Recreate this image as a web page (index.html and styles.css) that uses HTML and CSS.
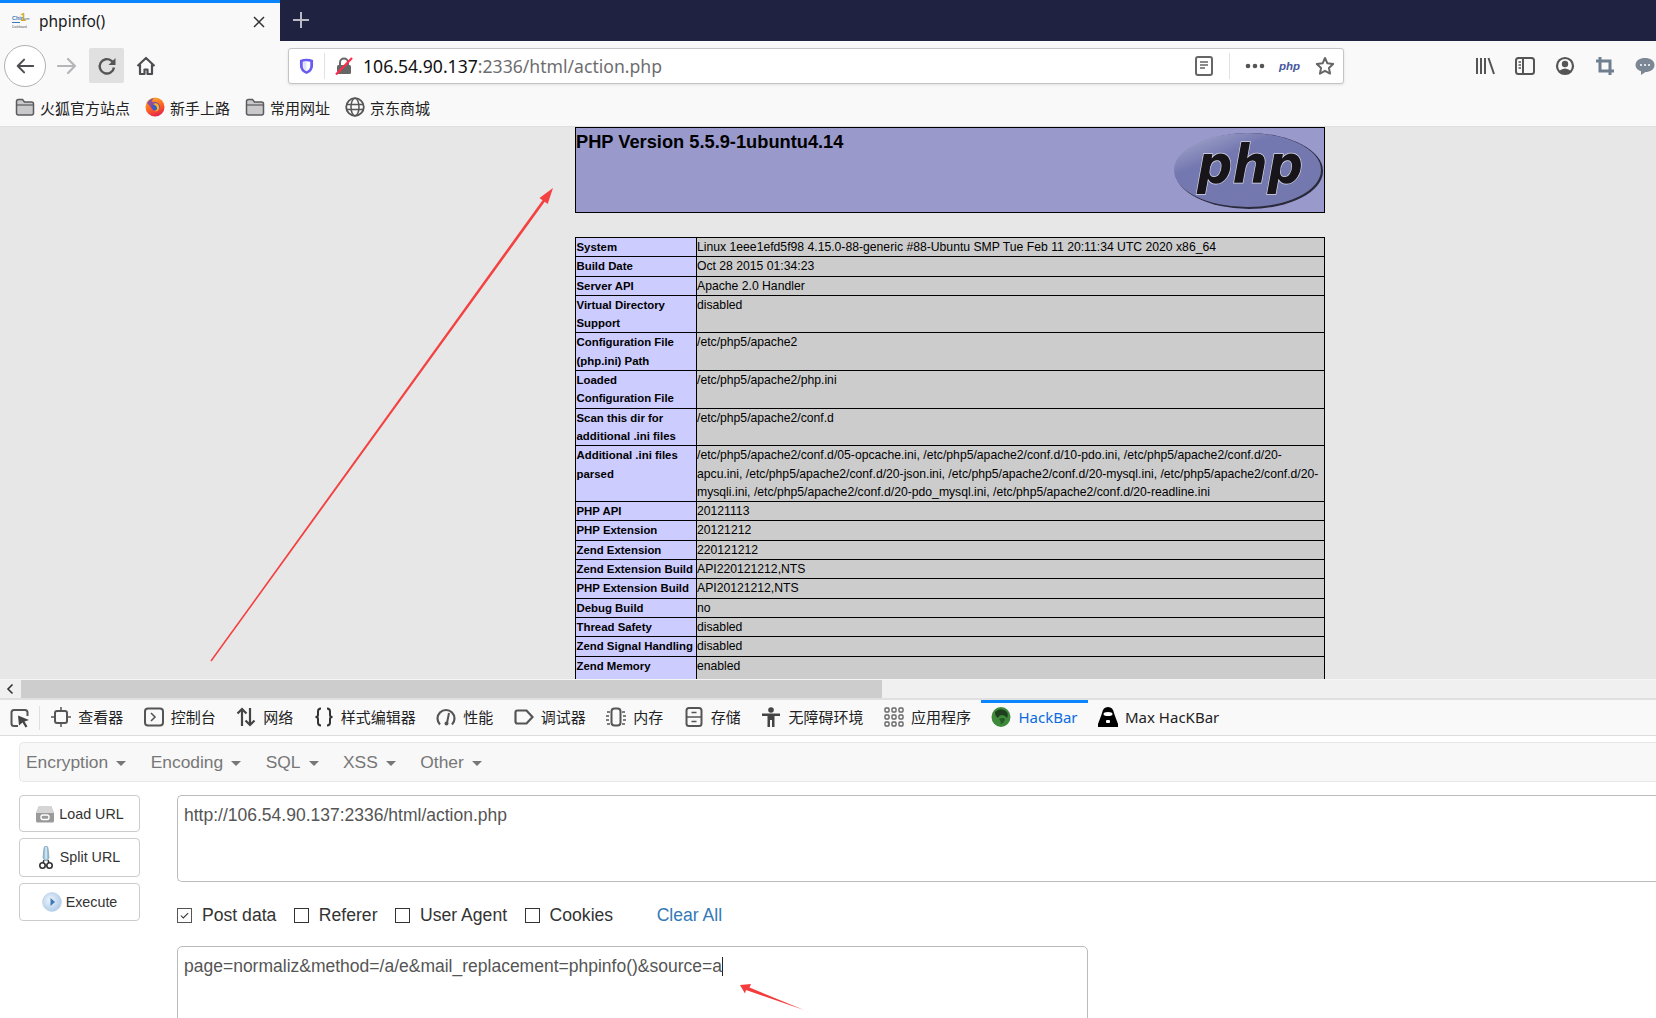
FILE: index.html
```html
<!DOCTYPE html>
<html lang="zh">
<head>
<meta charset="utf-8">
<title>phpinfo()</title>
<link rel="stylesheet" href="styles.css">
</head>
<body>
<svg class="icon-defs" width="0" height="0" aria-hidden="true">
  <defs>
    <symbol id="folder" viewBox="0 0 20 18"><path d="M1.5 3.500q0-2 2-2h4l2 2.500h7q2 0 2 2v9q0 2-2 2h-13q-2 0-2-2z" fill="#c9c9cb" stroke="#5b5b5f" stroke-width="1.500"/><path d="M2 7h16" stroke="#5b5b5f" stroke-width="1.200"/></symbol>
    <linearGradient id="ffg" x1="0.200" y1="0" x2="0.600" y2="1"><stop offset="0" stop-color="#ffb52e"/><stop offset=".5" stop-color="#ff6a1f"/><stop offset="1" stop-color="#e5214e"/></linearGradient>
    <radialGradient id="playg" cx=".4" cy=".4" r=".7"><stop offset="0" stop-color="#eef5fc"/><stop offset="1" stop-color="#a8c6e6"/></radialGradient>
    <linearGradient id="phpg" x1="0.100" y1="0" x2="0.900" y2="1"><stop offset="0" stop-color="#a5a8cc"/><stop offset=".3" stop-color="#7478b0"/><stop offset="1" stop-color="#7378ae"/></linearGradient>
  </defs>
</svg>

<header class="tabstrip">
  <div class="tab">
    <svg class="favicon" viewBox="0 0 18 18"><text x="0" y="8" class="fav-blue">Chin</text><text x="8.500" y="9" class="fav-yellow">1</text><text x="11" y="8" class="fav-small">.com</text><rect x="0" y="10" width="8" height="1" fill="#3f77b5"/><text x="0" y="16" class="fav-small">Dashboard</text></svg>
    <span class="tab-title">phpinfo()</span>
    <svg class="tab-close" viewBox="0 0 14 14"><path d="M2 2l10 10M12 2L2 12" stroke="#333" stroke-width="1.500" fill="none"/></svg>
  </div>
  <svg class="new-tab" viewBox="0 0 18 18"><path d="M9 1v16M1 9h16" stroke="#b9bac2" stroke-width="2" fill="none"/></svg>
</header>

<nav class="navbar">
  <div class="back"><svg viewBox="0 0 22 20" class="ic20"><path d="M20 10H3M10 3l-7 7 7 7" stroke="#4e4e52" stroke-width="2.200" fill="none" stroke-linecap="round" stroke-linejoin="round"/></svg></div>
  <svg viewBox="0 0 22 20" class="forward"><path d="M2 10h17M12 3l7 7-7 7" stroke="#b6b6b8" stroke-width="2.200" fill="none" stroke-linecap="round" stroke-linejoin="round"/></svg>
  <div class="reload"><svg viewBox="0 0 20 20" class="ic20"><path d="M17 11.500A7.200 7.200 0 1 1 14.500 4.800L17 7" stroke="#555" stroke-width="2.400" fill="none"/><path d="M18.500 2v7h-7z" fill="#555"/></svg></div>
  <svg viewBox="0 0 20 20" class="home"><path d="M1.500 10L10 2l8.500 8M4 8.500V18h4.500v-4.500h3V18H16V8.500" stroke="#4e4e52" stroke-width="2.200" fill="none" stroke-linejoin="round"/></svg>
  <div class="urlbar">
    <svg viewBox="0 0 16 18" class="shield"><path d="M1 2.500Q8 0 15 2.500V9q0 5.500-7 8.500Q1 14.500 1 9z" fill="#6a5cf0"/><path d="M4 4.500Q8 3.200 12 4.500V9q0 3.500-4 5.500Q4 12.500 4 9z" fill="#fff"/><path d="M8 4v10.200Q4.500 12.300 4.500 9V4.800z" fill="#dfe3ff"/></svg>
    <span class="url-sep"></span>
    <svg viewBox="0 0 18 18" class="lock"><path d="M5 8V5.500a4 4 0 0 1 8 0V8" stroke="#666" stroke-width="2" fill="none"/><rect x="2" y="8" width="14" height="9" rx="1.500" fill="#666"/><path d="M1 17.500L17 1" stroke="#ff2a4d" stroke-width="2.200"/></svg>
    <span class="url-text"><span class="url-host">106.54.90.137</span>:2336/html/action.php</span>
    <svg viewBox="0 0 18 20" class="reader"><rect x="1" y="1" width="16" height="18" rx="2" fill="none" stroke="#666" stroke-width="2"/><path d="M5 6h8M5 9h8M5 12h5" stroke="#666" stroke-width="1.500"/></svg>
    <span class="url-sep url-sep-right"></span>
    <svg viewBox="0 0 20 6" class="dots"><circle cx="3" cy="3" r="2.300" fill="#555"/><circle cx="10" cy="3" r="2.300" fill="#555"/><circle cx="17" cy="3" r="2.300" fill="#555"/></svg>
    <span class="php-mini">php</span>
    <svg viewBox="0 0 20 20" class="star"><path d="M10 2l2.400 5.300 5.800.7-4.300 3.900 1.200 5.700L10 14.800l-5.100 2.800 1.200-5.700L1.800 8l5.800-.7z" fill="none" stroke="#666" stroke-width="2" stroke-linejoin="round"/></svg>
  </div>
  <div class="nav-right">
    <svg viewBox="0 0 20 20" class="ic20"><path d="M2 2v16M6 2v16M10 2v16M13.500 2L19 18" stroke="#555" stroke-width="2" fill="none"/></svg>
    <svg viewBox="0 0 20 20" class="ic20"><rect x="1" y="2" width="18" height="16" rx="2.500" fill="none" stroke="#555" stroke-width="2"/><path d="M8 2v16" stroke="#555" stroke-width="2"/><path d="M3.500 6h2.500M3.500 9h2.500M3.500 12h2.500" stroke="#555" stroke-width="1.500"/></svg>
    <svg viewBox="0 0 20 20" class="ic20"><circle cx="10" cy="10" r="8" fill="none" stroke="#555" stroke-width="2.200"/><circle cx="10" cy="8" r="3.200" fill="#555"/><path d="M4 15q6-5 12 0l-3 3H7z" fill="#555"/></svg>
    <svg viewBox="0 0 20 20" class="ic20"><path d="M5 1v14h14M1 5h14v14" fill="none" stroke="#6f7f90" stroke-width="3"/></svg>
    <svg viewBox="0 0 20 20" class="ic20"><path d="M10 2c5 0 9.500 2.500 9.500 7s-4.500 7-9 7l-4.500 3v-3.800C2.500 14 .5 12 .5 9 .5 4.500 5 2 10 2z" fill="#7b8794"/><circle cx="6" cy="9" r="1" fill="#fff"/><circle cx="10" cy="9" r="1" fill="#fff"/><circle cx="14" cy="9" r="1" fill="#fff"/></svg>
  </div>
</nav>

<div class="bookmarks">
  <span class="bm"><svg class="ic-folder"><use href="#folder"/></svg>火狐官方站点</span>
  <span class="bm"><svg viewBox="0 0 20 20" class="ic-bm"><circle cx="10" cy="10" r="9.500" fill="url(#ffg)"/><path d="M2 6q2-4 7-5-2 2-2 4 3-1 6 1 3 3 1 6-3 3-6 1" fill="#6a3bc0" opacity=".75"/><circle cx="11" cy="10" r="3.500" fill="#2f5fd0"/><path d="M8 7c4-2 7 1 6 5-1 2-3 3-5 2 2 0 3-1 3-3s-2-3-4-4z" fill="#ffb01f"/></svg>新手上路</span>
  <span class="bm"><svg class="ic-folder"><use href="#folder"/></svg>常用网址</span>
  <span class="bm"><svg viewBox="0 0 20 20" class="ic-bm"><circle cx="10" cy="10" r="8.800" fill="none" stroke="#555" stroke-width="1.800"/><ellipse cx="10" cy="10" rx="4" ry="8.800" fill="none" stroke="#555" stroke-width="1.500"/><path d="M1.500 7.500h17M1.500 12.500h17" stroke="#555" stroke-width="1.500"/></svg>京东商城</span>
</div>

<main class="viewport">
  <div class="php-page">
    <div class="php-head">
      <h1 class="php-title">PHP Version 5.5.9-1ubuntu4.14</h1>
      <svg class="php-logo" viewBox="0 0 150 80">
        <ellipse cx="75" cy="40" rx="74" ry="38" fill="#2a2a3a"/>
        <ellipse cx="73.500" cy="39" rx="73.500" ry="37" fill="url(#phpg)"/>
        <text x="23" y="52" class="php-logo-text" textLength="106" lengthAdjust="spacingAndGlyphs">php</text>
      </svg>
    </div>
    <table class="php-table">
      <colgroup><col class="col-key"><col></colgroup>
      <tbody>
        <tr><th>System</th><td>Linux 1eee1efd5f98 4.15.0-88-generic #88-Ubuntu SMP Tue Feb 11 20:11:34 UTC 2020 x86_64</td></tr>
        <tr><th>Build Date</th><td>Oct 28 2015 01:34:23</td></tr>
        <tr><th>Server API</th><td>Apache 2.0 Handler</td></tr>
        <tr><th>Virtual Directory Support</th><td>disabled</td></tr>
        <tr><th>Configuration File (php.ini) Path</th><td>/etc/php5/apache2</td></tr>
        <tr><th>Loaded<br>Configuration File</th><td>/etc/php5/apache2/php.ini</td></tr>
        <tr><th>Scan this dir for additional .ini files</th><td>/etc/php5/apache2/conf.d</td></tr>
        <tr><th>Additional .ini files parsed</th><td>/etc/php5/apache2/conf.d/05-opcache.ini, /etc/php5/apache2/conf.d/10-pdo.ini, /etc/php5/apache2/conf.d/20-apcu.ini, /etc/php5/apache2/conf.d/20-json.ini, /etc/php5/apache2/conf.d/20-mysql.ini, /etc/php5/apache2/conf.d/20-mysqli.ini, /etc/php5/apache2/conf.d/20-pdo_mysql.ini, /etc/php5/apache2/conf.d/20-readline.ini</td></tr>
        <tr><th>PHP API</th><td>20121113</td></tr>
        <tr><th>PHP Extension</th><td>20121212</td></tr>
        <tr><th>Zend Extension</th><td>220121212</td></tr>
        <tr><th>Zend Extension Build</th><td>API220121212,NTS</td></tr>
        <tr><th>PHP Extension Build</th><td>API20121212,NTS</td></tr>
        <tr><th>Debug Build</th><td>no</td></tr>
        <tr><th>Thread Safety</th><td>disabled</td></tr>
        <tr><th>Zend Signal Handling</th><td>disabled</td></tr>
        <tr><th>Zend Memory Manager</th><td>enabled</td></tr>
      </tbody>
    </table>
  </div>
</main>

<div class="hscroll">
  <svg class="hscroll-arrow" viewBox="0 0 8 12"><path d="M6.500 1.500L2 6l4.500 4.500" stroke="#333" stroke-width="1.600" fill="none"/></svg>
  <div class="hscroll-thumb"></div>
</div>

<div class="dev-tabs">
  <div class="picker"><svg viewBox="0 0 20 20" class="ic20"><path d="M8 18H4q-2.500 0-2.500-2.500v-11Q1.500 2 4 2h11q2.500 0 2.500 2.500V8" fill="none" stroke="#555" stroke-width="2"/><path d="M8 7.500l11 4.500-4.500 1.500 3 5-2 1-3-5-3.500 3z" fill="#444"/></svg></div>
  <div class="dev-tab"><svg viewBox="0 0 20 20" class="ic20"><rect x="4" y="4" width="12" height="12" rx="2" fill="none" stroke="#555" stroke-width="2"/><path d="M10 0v4M10 16v4M0 10h4M16 10h4" stroke="#555" stroke-width="1.500"/></svg>查看器</div>
  <div class="dev-tab"><svg viewBox="0 0 20 20" class="ic20"><rect x="1" y="1.500" width="18" height="17" rx="3" fill="none" stroke="#555" stroke-width="2"/><path d="M7 6l4 4-4 4" fill="none" stroke="#555" stroke-width="1.600"/></svg>控制台</div>
  <div class="dev-tab"><svg viewBox="0 0 20 20" class="ic20"><path d="M6 19V2M1.500 6.500L6 2l4.500 4.500M14 1v17M9.500 13.500L14 18l4.500-4.500" fill="none" stroke="#444" stroke-width="2.200"/></svg>网络</div>
  <div class="dev-tab"><svg viewBox="0 0 20 20" class="ic20"><path d="M7 1.500q-3 0-3 3V8q0 2-2.500 2Q4 10 4 12v3.500q0 3 3 3M13 1.500q3 0 3 3V8q0 2 2.500 2-2.500 0-2.500 2v3.500q0 3-3 3" fill="none" stroke="#333" stroke-width="2"/></svg>样式编辑器</div>
  <div class="dev-tab"><svg viewBox="0 0 20 20" class="ic20"><path d="M4 17.500A8.500 8.500 0 1 1 16 17.500" fill="none" stroke="#555" stroke-width="2.200"/><path d="M13 6l-2 10" stroke="#555" stroke-width="2"/><circle cx="10.500" cy="16.500" r="2" fill="#555"/></svg>性能</div>
  <div class="dev-tab"><svg viewBox="0 0 20 20" class="ic20"><path d="M3.500 3.500h9L18.500 10l-6 6.500h-9q-2 0-2-2v-9q0-2 2-2z" fill="none" stroke="#555" stroke-width="2.200"/></svg>调试器</div>
  <div class="dev-tab"><svg viewBox="0 0 20 20" class="ic20"><rect x="5.500" y="1.500" width="9" height="17" rx="3" fill="none" stroke="#555" stroke-width="2"/><path d="M1 5h3M0 9h3M0 13h3M1 17h3M16 5h3M17 9h3M17 13h3M16 17h3" stroke="#555" stroke-width="1.300"/></svg>内存</div>
  <div class="dev-tab"><svg viewBox="0 0 20 20" class="ic20"><rect x="2.500" y="1" width="15" height="18" rx="2.500" fill="none" stroke="#555" stroke-width="2"/><path d="M3 10h14M7.500 5.500h5M7.500 14.500h5" stroke="#555" stroke-width="1.600"/></svg>存储</div>
  <div class="dev-tab"><svg viewBox="0 0 20 20" class="ic20"><circle cx="10" cy="3" r="2.800" fill="#444"/><path d="M1 6.500h18v2.500h-5.500v11H11v-7H9v7H6.500V9H1z" fill="#444"/></svg>无障碍环境</div>
  <div class="dev-tab"><svg viewBox="0 0 20 20" class="ic20"><g fill="none" stroke="#666" stroke-width="1.400"><rect x="1" y="1" width="4" height="4" rx="1"/><rect x="8" y="1" width="4" height="4" rx="1"/><rect x="15" y="1" width="4" height="4" rx="1"/><rect x="1" y="8" width="4" height="4" rx="1"/><rect x="8" y="8" width="4" height="4" rx="1"/><rect x="15" y="8" width="4" height="4" rx="1"/><rect x="1" y="15" width="4" height="4" rx="1"/><rect x="8" y="15" width="4" height="4" rx="1"/><rect x="15" y="15" width="4" height="4" rx="1"/></g></svg>应用程序</div>
  <div class="dev-tab dev-tab-active"><svg viewBox="0 0 20 20" class="ic20"><ellipse cx="10" cy="10" rx="9.500" ry="10" fill="#3e8a3a"/><path d="M4 5q5-5 11-1 3 3 1 7-2-3-5-3t-4 3q-3-2-3-6z" fill="#1f3f20"/><path d="M8 12q4-2 6 0-1 5-5 5 2-2-1-5z" fill="#27592a"/></svg>HackBar</div>
  <div class="dev-tab"><svg viewBox="0 0 20 20" class="ic20"><path d="M10 0q5 0 6 6l1 3 3 8v3H0v-3l3-8 1-3q1-6 6-6z" fill="#000"/><ellipse cx="10" cy="7" rx="4.500" ry="2" fill="#fff"/><rect x="8" y="13" width="4" height="3" rx="1" fill="#fff"/></svg>Max HacKBar</div>
</div>

<section class="hackbar">
  <div class="hb-menu">
    <span class="hb-menu-item">Encryption<i class="caret"></i></span>
    <span class="hb-menu-item">Encoding<i class="caret"></i></span>
    <span class="hb-menu-item">SQL<i class="caret"></i></span>
    <span class="hb-menu-item">XSS<i class="caret"></i></span>
    <span class="hb-menu-item">Other<i class="caret"></i></span>
  </div>
  <div class="hb-body">
    <div class="hb-buttons">
      <button class="hb-btn hb-btn-load"><svg viewBox="0 0 20 18" class="btn-ic"><path d="M4 1h12l3 7v8q0 1.500-1.500 1.500h-15Q1 17.500 1 16V8z" fill="#9a9a9a"/><path d="M4 1h12l3 7H1z" fill="#d5d5d5"/><rect x="6" y="10" width="8" height="4.500" rx="2" fill="none" stroke="#fff" stroke-width="1.400"/></svg>Load URL</button>
      <button class="hb-btn hb-btn-split"><svg viewBox="0 0 14 24" class="btn-ic-tall"><path d="M4 12L5 2q.5-2 2-2t2 2l1 10-2.500 3H7z" fill="#9cc4dc" stroke="#6a8ba0" stroke-width=".6"/><path d="M7 1v12" stroke="#fff"/><circle cx="3.500" cy="19.500" r="2.700" fill="none" stroke="#333" stroke-width="1.600"/><circle cx="10.500" cy="19.500" r="2.700" fill="none" stroke="#333" stroke-width="1.600"/><path d="M5 14l-1 3M9 14l1 3" stroke="#333" stroke-width="1.500"/></svg>Split URL</button>
      <button class="hb-btn hb-btn-exec"><svg viewBox="0 0 20 20" class="btn-ic"><circle cx="10" cy="10" r="9.300" fill="url(#playg)" stroke="#bcd3ea"/><path d="M8.500 6l4.500 4-4.500 4z" fill="#3d78b8"/></svg>Execute</button>
    </div>
    <div class="hb-form">
      <div class="hb-input hb-url">http://106.54.90.137:2336/html/action.php</div>
      <div class="hb-checks">
        <label class="hb-check"><span class="box box-on"><svg viewBox="0 0 16 16"><path d="M3.500 8l3 3 6-6" fill="none" stroke="#333" stroke-width="1.300"/></svg></span>Post data</label>
        <label class="hb-check"><span class="box"></span>Referer</label>
        <label class="hb-check"><span class="box"></span>User Agent</label>
        <label class="hb-check"><span class="box"></span>Cookies</label>
        <a class="hb-clear">Clear All</a>
      </div>
      <div class="hb-input hb-post"><span class="caret-host">page=normaliz&amp;method=/a/e&amp;mail_replacement=phpinfo()&amp;source=a</span></div>
    </div>
  </div>
</section>

<svg class="annotations" viewBox="0 0 1656 1018" aria-hidden="true">
  <path d="M210.400 660.600L542.500 200.200 539.500 198.100 553 188 547.700 203.900 544.700 201.800 211.600 661.400z" fill="#f44141"/>
  <path d="M804 1010L746 990 745 993.500 740 985 751 984 749.500 987.500z" fill="#f43c3c"/>
</svg>
</body>
</html>
```

FILE: styles.css
```css
* { box-sizing: border-box; }
html, body { margin: 0; padding: 0; }
body {
  width: 1656px;
  height: 1018px;
  overflow: hidden;
  position: relative;
  background: #fff;
  font-family: "Noto Sans", "Noto Sans CJK SC", sans-serif;
  color: #222;
}
svg { display: block; flex: none; }
.icon-defs { position: absolute; }
.ic20 { width: 20px; height: 20px; }

/* tab strip */
.tabstrip { height: 41px; background: #1f2341; display: flex; align-items: center; }
.tab {
  width: 280px; height: 41px; background: #f9f9fa; border-top: 3px solid #0a84ff;
  display: flex; align-items: center; padding: 0 0 3px 12px;
}
.favicon { width: 18px; height: 18px; }
.fav-blue { font: bold 5.500px "Liberation Sans", sans-serif; fill: #3f77b5; }
.fav-yellow { font: bold 10px "Liberation Sans", sans-serif; fill: #d7a81f; }
.fav-small { font: 3px "Liberation Sans", sans-serif; fill: #555; }
.tab-title { font-size: 15.500px; margin-left: 9px; color: #1a1a1a; flex: 1; }
.tab-close { width: 14px; height: 14px; margin: 3px 14px 0 0; }
.new-tab { width: 18px; height: 18px; margin-left: 12px; margin-top: -1px; }

/* nav bar */
.navbar { height: 49px; background: #f9f9fa; display: flex; align-items: center; }
.back {
  width: 42px; height: 42px; border-radius: 50%; border: 1px solid #b1b1b3; background: #fff;
  margin-left: 4px; display: flex; align-items: center; justify-content: center;
}
.forward { width: 22px; height: 20px; margin-left: 10px; }
.reload {
  width: 35px; height: 35px; background: #e0e0e1; border-radius: 2px; margin-left: 11px;
  display: flex; align-items: center; justify-content: center;
}
.home { width: 20px; height: 20px; margin-left: 12px; }
.urlbar {
  width: 1056px; height: 36px; margin-left: 132px; background: #fff; border: 1px solid #c4c4c6;
  border-radius: 3px; box-shadow: 0 1px 3px rgba(0,0,0,.1); display: flex; align-items: center;
}
.shield { width: 15px; height: 18px; margin-left: 10px; }
.url-sep { width: 1px; height: 26px; background: #e2e2e3; margin-left: 10px; }
.lock { width: 18px; height: 18px; margin-left: 10px; }
.url-text { font-size: 17.600px; color: #6d6d6f; margin-left: 10px; width: 832px; white-space: nowrap; }
.url-host { color: #111; }
.reader { width: 18px; height: 20px; }
.url-sep-right { margin-left: 16px; }
.dots { width: 20px; height: 6px; margin-left: 15px; }
.php-mini { font: italic bold 11.500px "Liberation Sans", sans-serif; color: #47579e; margin-left: 14px; width: 20px; }
.star { width: 20px; height: 20px; margin-left: 16px; }
.nav-right { display: flex; gap: 20px; margin-left: 131px; }

/* bookmarks */
.bookmarks {
  height: 37px; background: #f9f9fa; border-bottom: 1px solid #e0e0e0; display: flex; align-items: center;
  padding: 0 0 2px 15px; font-size: 15px; color: #222; gap: 15px;
}
.bm { display: flex; align-items: center; gap: 5px; }
.ic-folder { width: 20px; height: 18px; }
.ic-bm { width: 20px; height: 20px; }

/* page */
.viewport { height: 552px; background: #e7e7e7; overflow: hidden; }
.php-page { width: 750px; margin-left: 575px; font-family: "Liberation Sans", Arial, sans-serif; color: #000; }
.php-head {
  height: 86px; background: #9999cc; border: 1px solid #000; display: flex; justify-content: space-between;
}
.php-title { font-size: 18.250px; line-height: 24px; margin: 2px 0 0 0; font-weight: bold; }
.php-logo { width: 150px; height: 80px; margin-top: 3px; }
.php-logo-text {
  font: italic bold 53px "DejaVu Sans", sans-serif; fill: #17151a; stroke: #d8d8e6; stroke-width: 1.400px;
  paint-order: stroke;
}
.php-table { width: 750px; margin-top: 24px; border-collapse: collapse; table-layout: fixed; font-size: 12.200px; }
.col-key { width: 121px; }
.php-table th, .php-table td { border: 1px solid #000; line-height: 18.300px; vertical-align: top; }
.php-table th { background: #ccccff; text-align: left; font-weight: bold; font-size: 11.400px; padding: 0 0 0 .5px; }
.php-table td { background: #cccccc; padding: 0; }

/* scrollbar */
.hscroll { height: 21px; background: #f0f0f0; border-bottom: 2px solid #e0e0e0; border-top: 1px solid #f5f5f5; display: flex; align-items: center; }
.hscroll-arrow { width: 8px; height: 12px; margin-left: 6px; }
.hscroll-thumb { width: 861px; height: 18px; background: #cdcdcd; margin-left: 7px; }

/* devtools tabs */
.dev-tabs { height: 36px; background: #f9f9fa; border-bottom: 1px solid #dcdcdc; display: flex; align-items: stretch; font-size: 15px; color: #222; }
.picker { width: 41px; padding: 8px 10px 0 10px; position: relative; }
.picker::after { content: ""; position: absolute; right: 1px; top: 6px; height: 24px; width: 1px; background: #e0e0e0; }
.dev-tab { display: flex; align-items: center; gap: 7px; padding: 0 10.250px 2px; white-space: nowrap; }
.dev-tab-active { box-shadow: inset 0 3px 0 #0a84ff; color: #0a6be0; }

/* hackbar */
.hackbar { font-family: "Liberation Sans", Arial, sans-serif; background: #fff; padding: 6px 0 0 19px; height: 283px; overflow: hidden; }
.hb-menu {
  height: 40px; background: #f8f8f8; border: 1px solid #e7e7e7; border-right: 0; border-radius: 5px 0 0 5px;
  display: flex; align-items: center; padding-left: 6px; gap: 24.500px; color: #777; font-size: 17.400px;
}
.hb-menu-item { display: flex; align-items: center; gap: 8px; }
.caret { display: block; width: 0; height: 0; border-left: 5px solid transparent; border-right: 5px solid transparent; border-top: 5px solid #777; margin-top: 2px; }
.hb-body { display: flex; margin-top: 13px; }
.hb-buttons { width: 121px; display: flex; flex-direction: column; gap: 6px; }
.hb-btn {
  width: 121px; background: #fff; border: 1px solid #ccc; border-radius: 4px; font: 14.300px "Liberation Sans", Arial, sans-serif;
  color: #333; display: flex; align-items: center; justify-content: center; gap: 4px; padding: 0;
}
.hb-btn-load { height: 37px; }
.hb-btn-split { height: 39px; gap: 7px; padding-bottom: 2px; }
.hb-btn-exec { height: 38px; padding-bottom: 1px; }
.btn-ic { width: 20px; height: 20px; }
.btn-ic-tall { width: 14px; height: 24px; margin-top: 2px; }
.hb-form { margin-left: 37px; flex: 1; }
.hb-input { border: 1px solid #bbb; background: #fff; font-size: 17.500px; color: #555; padding: 8px 6px; line-height: 22px; }
.hb-url { height: 87px; border-right: 0; border-radius: 5px 0 0 5px; }
.hb-checks { display: flex; align-items: center; height: 64px; padding-top: 2px; font-size: 17.600px; color: #333; }
.hb-check { display: flex; align-items: center; gap: 10px; margin-right: 17.500px; }
.box { width: 15px; height: 15px; border: 1px solid #333; background: #fff; display: block; }
.box-on { border-color: #555; }
.box-on svg { width: 13px; height: 13px; }
.hb-clear { color: #337ab7; margin-left: 26px; }
.hb-post { width: 911px; height: 120px; border-radius: 5px 5px 0 0; }
.caret-host { border-right: 1px solid #222; display: inline-block; line-height: 19px; }

.annotations { position: absolute; left: 0; top: 0; width: 1656px; height: 1018px; pointer-events: none; }
```
